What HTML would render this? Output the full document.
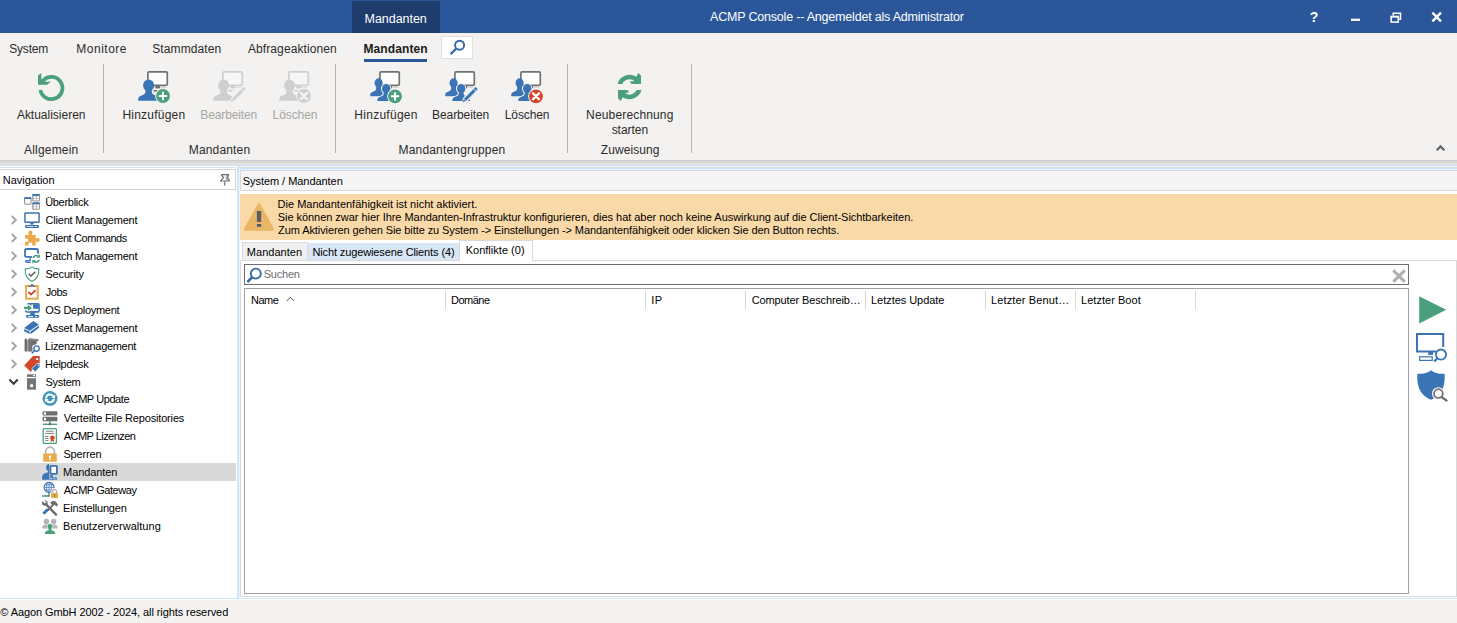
<!DOCTYPE html>
<html lang="de"><head><meta charset="utf-8"><title>ACMP Console</title>
<style>
html,body{margin:0;padding:0}
body{width:1457px;height:623px;overflow:hidden;position:relative;background:#fff;font-family:"Liberation Sans",sans-serif}
.b{position:absolute;box-sizing:border-box}
.t{position:absolute;white-space:pre;font-family:"Liberation Sans",sans-serif}
svg{position:absolute;overflow:visible}

</style></head>
<body>
<!-- title bar -->
<div class="b" style="left:0;top:0;width:1457px;height:33px;background:#2b579a"></div>
<div class="b" style="left:352px;top:1px;width:88px;height:32px;background:#1e3c6c"></div>
<!-- ribbon -->
<div class="b" style="left:0;top:33px;width:1457px;height:127px;background:#f3f2f1"></div>
<div class="b" style="left:0;top:160px;width:1457px;height:5px;background:linear-gradient(#d1d1d1,#e4e4e4)"></div>
<div class="b" style="left:0;top:160px;width:1457px;height:1px;background:#cdcccb"></div>
<div class="b" style="left:364px;top:59px;width:63px;height:3px;background:#2b579a"></div>
<div class="b" style="left:441px;top:36px;width:32px;height:23px;background:#fff;border:1px solid #e1dfdd"></div>
<div class="b" style="left:103px;top:64px;width:1px;height:89px;background:#b6b4b2"></div>
<div class="b" style="left:335px;top:64px;width:1px;height:89px;background:#b6b4b2"></div>
<div class="b" style="left:567px;top:64px;width:1px;height:89px;background:#b6b4b2"></div>
<div class="b" style="left:691px;top:64px;width:1px;height:89px;background:#b6b4b2"></div>
<!-- client area -->
<div class="b" style="left:0;top:165px;width:1457px;height:1px;background:#cbe6fc"></div>
<!-- left panel -->
<div class="b" style="left:0;top:167px;width:236px;height:1px;background:#dedede"></div>
<div class="b" style="left:0;top:169px;width:236px;height:21px;background:#fff;border:1px solid #d4d4d4;border-left:0"></div>
<div class="b" style="left:0;top:463px;width:236px;height:18px;background:#d9d9d9"></div>
<div class="b" style="left:237px;top:166px;width:2px;height:433px;background:#cfe6fb"></div>
<div class="b" style="left:0;top:598px;width:1457px;height:1px;background:#cfe6fb"></div>
<!-- right panel -->
<div class="b" style="left:239px;top:166px;width:1218px;height:4px;background:#e4f2fe"></div>
<div class="b" style="left:239px;top:167px;width:1218px;height:1px;background:#dcdcdc"></div>
<div class="b" style="left:240px;top:168px;width:1217px;height:1px;background:#cbe6fc"></div>
<div class="b" style="left:239px;top:170px;width:1px;height:429px;background:#e9f4fe"></div>
<div class="b" style="left:240px;top:170px;width:1220px;height:21px;background:#f5f5f5;border:1px solid #d8d8d8"></div>
<div class="b" style="left:240px;top:194px;width:1217px;height:46px;background:#fad9a8"></div>
<!-- tabs -->
<div class="b" style="left:240px;top:260px;width:1217px;height:337px;background:#fff;border:1px solid #dadada"></div>
<div class="b" style="left:242px;top:242px;width:66px;height:18px;background:#f0f0f0;border:1px solid #dadada;border-bottom:0"></div>
<div class="b" style="left:307px;top:243px;width:153px;height:17px;background:#d8e6f5;border-left:1px solid #cfdff0;border-right:1px solid #cfdff0"></div>
<div class="b" style="left:459px;top:240px;width:74px;height:21px;background:#fff;border:1px solid #dadada;border-bottom:0"></div>
<!-- search -->
<div class="b" style="left:244px;top:264px;width:1165px;height:21px;background:#fff;border:1px solid #6e6e6e"></div>
<!-- grid -->
<div class="b" style="left:244px;top:288px;width:1165px;height:306px;background:#fff;border:1px solid #a0a0a8"></div>
<div class="b" style="left:445px;top:291px;width:1px;height:18px;background:#d5d5d5"></div>
<div class="b" style="left:645px;top:291px;width:1px;height:18px;background:#d5d5d5"></div>
<div class="b" style="left:745px;top:291px;width:1px;height:18px;background:#d5d5d5"></div>
<div class="b" style="left:865px;top:291px;width:1px;height:18px;background:#d5d5d5"></div>
<div class="b" style="left:985px;top:291px;width:1px;height:18px;background:#d5d5d5"></div>
<div class="b" style="left:1075px;top:291px;width:1px;height:18px;background:#d5d5d5"></div>
<div class="b" style="left:1195px;top:291px;width:1px;height:18px;background:#d5d5d5"></div>
<!-- footer -->
<div class="b" style="left:0;top:600px;width:1457px;height:23px;background:#f3f2f1"></div>

<svg style="left:38px;top:71px" width="32" height="32" viewBox="0 0 32 32"><path d="M5.1,9.6 A11.1,11.1 0 1 1 2.4,19" fill="none" stroke="#4a9f7c" stroke-width="3.8"/><path d="M3.3,1.9 L0,4.5 L0,13.8 L9.1,13.8 L12.8,10.7 L7,10.7 L3.3,8 Z" fill="#4a9f7c"/></svg>
<svg style="left:138px;top:71px" width="32" height="32" viewBox="0 0 32 32"><rect x="9.9" y="0.9" width="19.4" height="13.4" rx="1.2" fill="#ffffff" stroke="#727272" stroke-width="1.7"/><rect x="17.3" y="14.6" width="4.7" height="2.8" fill="#727272"/><rect x="22" y="16" width="6" height="1" fill="#d9d9d9"/><rect x="15.4" y="19" width="4" height="1.6" fill="#727272"/><ellipse cx="10.6" cy="14.3" rx="5.5" ry="5.9" fill="#3a74b5"/><path d="M0.2,29.8 C0,26.4 1.2,25.2 4.2,24.2 C7,23.2 7.6,22.2 7.4,19 L13.8,19 C13.6,22.2 14.2,23.2 17,24.2 C20,25.2 21.2,26.4 21,29.8 Z" fill="#3a74b5"/><circle cx="25" cy="25" r="7.9" fill="#f3f2f1"/><circle cx="25" cy="25" r="6.9" fill="#4a9f7c"/><path d="M20.86,25 L29.14,25 M25,20.86 L25,29.14" stroke="#fff" stroke-width="2.10" fill="none"/></svg>
<svg style="left:213px;top:71px" width="32" height="32" viewBox="0 0 32 32"><rect x="9.9" y="0.9" width="19.4" height="13.4" rx="1.2" fill="#f6f6f6" stroke="#cfcfcf" stroke-width="1.7"/><rect x="17.3" y="14.6" width="4.7" height="2.8" fill="#cfcfcf"/><rect x="22" y="16" width="6" height="1" fill="#e0e0e0"/><rect x="15.4" y="19" width="4" height="1.6" fill="#cfcfcf"/><ellipse cx="10.6" cy="14.3" rx="5.5" ry="5.9" fill="#cfcfcf"/><path d="M0.2,29.8 C0,26.4 1.2,25.2 4.2,24.2 C7,23.2 7.6,22.2 7.4,19 L13.8,19 C13.6,22.2 14.2,23.2 17,24.2 C20,25.2 21.2,26.4 21,29.8 Z" fill="#cfcfcf"/><path d="M16.60,32.31 L22.07,30.70 L34.26,18.43 L30.35,14.55 L18.17,26.82 Z" fill="#f3f2f1"/><path d="M17.30,31.60 L21.22,29.85 L32.70,18.29 L30.50,16.11 L19.02,27.67 Z" fill="#cfcfcf"/><path d="M31.08,20.35 L28.46,17.74" stroke="#f3f2f1" stroke-width="0.9"/><path d="M20.83,30.03 L18.85,28.06" stroke="#f3f2f1" stroke-width="0.7"/></svg>
<svg style="left:279px;top:71px" width="32" height="32" viewBox="0 0 32 32"><rect x="9.9" y="0.9" width="19.4" height="13.4" rx="1.2" fill="#f6f6f6" stroke="#cfcfcf" stroke-width="1.7"/><rect x="17.3" y="14.6" width="4.7" height="2.8" fill="#cfcfcf"/><rect x="22" y="16" width="6" height="1" fill="#e0e0e0"/><rect x="15.4" y="19" width="4" height="1.6" fill="#cfcfcf"/><ellipse cx="10.6" cy="14.3" rx="5.5" ry="5.9" fill="#cfcfcf"/><path d="M0.2,29.8 C0,26.4 1.2,25.2 4.2,24.2 C7,23.2 7.6,22.2 7.4,19 L13.8,19 C13.6,22.2 14.2,23.2 17,24.2 C20,25.2 21.2,26.4 21,29.8 Z" fill="#cfcfcf"/><circle cx="25" cy="25" r="7.9" fill="#f3f2f1"/><circle cx="25" cy="25" r="6.9" fill="#cfcfcf"/><path d="M22.033,22.033 L27.967,27.967 M27.967,22.033 L22.033,27.967" stroke="#f6f6f6" stroke-width="2.28" stroke-linecap="round" fill="none"/></svg>
<svg style="left:370px;top:71px" width="32" height="32" viewBox="0 0 32 32"><rect x="9.9" y="0.9" width="19.4" height="13.4" rx="1.2" fill="#ffffff" stroke="#727272" stroke-width="1.7"/><rect x="17.3" y="14.6" width="4.7" height="2.8" fill="#727272"/><rect x="22" y="16" width="6" height="1" fill="#d9d9d9"/><rect x="15.4" y="19" width="4" height="1.6" fill="#727272"/><ellipse cx="8.6" cy="11.9" rx="4.1" ry="4.6" fill="#3a74b5"/><path d="M0.2,25.2 C0,22.4 1,21.4 3.4,20.6 C5.8,19.8 6.3,18.8 6.2,16 L11,16 C10.9,18.8 11.4,19.8 13.8,20.6 C16.2,21.4 17.2,22.4 17,25.2 Z" fill="#3a74b5"/><ellipse cx="16.2" cy="17.7" rx="4.2" ry="4.8" fill="#f3f2f1" stroke="#f3f2f1" stroke-width="1.8"/><path d="M7.4,30 C7.2,27.4 8.2,26.4 10.8,25.6 C13.4,24.8 13.9,24 13.8,21.6 L18.6,21.6 C18.5,24 19,24.8 21.6,25.6 C24.2,26.4 25.2,27.4 25,30 Z"  fill="#f3f2f1" stroke="#f3f2f1" stroke-width="1.8"/><ellipse cx="16.2" cy="17.7" rx="4.2" ry="4.8" fill="#3a74b5"/><path d="M7.4,30 C7.2,27.4 8.2,26.4 10.8,25.6 C13.4,24.8 13.9,24 13.8,21.6 L18.6,21.6 C18.5,24 19,24.8 21.6,25.6 C24.2,26.4 25.2,27.4 25,30 Z"  fill="#3a74b5"/><circle cx="25" cy="25.3" r="7.9" fill="#f3f2f1"/><circle cx="25" cy="25.3" r="6.9" fill="#4a9f7c"/><path d="M20.86,25.3 L29.14,25.3 M25,21.16 L25,29.44" stroke="#fff" stroke-width="2.10" fill="none"/></svg>
<svg style="left:445px;top:71px" width="32" height="32" viewBox="0 0 32 32"><rect x="9.9" y="0.9" width="19.4" height="13.4" rx="1.2" fill="#ffffff" stroke="#727272" stroke-width="1.7"/><rect x="17.3" y="14.6" width="4.7" height="2.8" fill="#727272"/><rect x="22" y="16" width="6" height="1" fill="#d9d9d9"/><rect x="15.4" y="19" width="4" height="1.6" fill="#727272"/><ellipse cx="8.6" cy="11.9" rx="4.1" ry="4.6" fill="#3a74b5"/><path d="M0.2,25.2 C0,22.4 1,21.4 3.4,20.6 C5.8,19.8 6.3,18.8 6.2,16 L11,16 C10.9,18.8 11.4,19.8 13.8,20.6 C16.2,21.4 17.2,22.4 17,25.2 Z" fill="#3a74b5"/><ellipse cx="16.2" cy="17.7" rx="4.2" ry="4.8" fill="#f3f2f1" stroke="#f3f2f1" stroke-width="1.8"/><path d="M7.4,30 C7.2,27.4 8.2,26.4 10.8,25.6 C13.4,24.8 13.9,24 13.8,21.6 L18.6,21.6 C18.5,24 19,24.8 21.6,25.6 C24.2,26.4 25.2,27.4 25,30 Z"  fill="#f3f2f1" stroke="#f3f2f1" stroke-width="1.8"/><ellipse cx="16.2" cy="17.7" rx="4.2" ry="4.8" fill="#3a74b5"/><path d="M7.4,30 C7.2,27.4 8.2,26.4 10.8,25.6 C13.4,24.8 13.9,24 13.8,21.6 L18.6,21.6 C18.5,24 19,24.8 21.6,25.6 C24.2,26.4 25.2,27.4 25,30 Z"  fill="#3a74b5"/><path d="M16.60,32.31 L22.07,30.70 L34.26,18.43 L30.35,14.55 L18.17,26.82 Z" fill="#f3f2f1"/><path d="M17.30,31.60 L21.22,29.85 L32.70,18.29 L30.50,16.11 L19.02,27.67 Z" fill="#3a74b5"/><path d="M31.08,20.35 L28.46,17.74" stroke="#f3f2f1" stroke-width="0.9"/><path d="M20.83,30.03 L18.85,28.06" stroke="#f3f2f1" stroke-width="0.7"/></svg>
<svg style="left:511px;top:71px" width="32" height="32" viewBox="0 0 32 32"><rect x="9.9" y="0.9" width="19.4" height="13.4" rx="1.2" fill="#ffffff" stroke="#727272" stroke-width="1.7"/><rect x="17.3" y="14.6" width="4.7" height="2.8" fill="#727272"/><rect x="22" y="16" width="6" height="1" fill="#d9d9d9"/><rect x="15.4" y="19" width="4" height="1.6" fill="#727272"/><ellipse cx="8.6" cy="11.9" rx="4.1" ry="4.6" fill="#3a74b5"/><path d="M0.2,25.2 C0,22.4 1,21.4 3.4,20.6 C5.8,19.8 6.3,18.8 6.2,16 L11,16 C10.9,18.8 11.4,19.8 13.8,20.6 C16.2,21.4 17.2,22.4 17,25.2 Z" fill="#3a74b5"/><ellipse cx="16.2" cy="17.7" rx="4.2" ry="4.8" fill="#f3f2f1" stroke="#f3f2f1" stroke-width="1.8"/><path d="M7.4,30 C7.2,27.4 8.2,26.4 10.8,25.6 C13.4,24.8 13.9,24 13.8,21.6 L18.6,21.6 C18.5,24 19,24.8 21.6,25.6 C24.2,26.4 25.2,27.4 25,30 Z"  fill="#f3f2f1" stroke="#f3f2f1" stroke-width="1.8"/><ellipse cx="16.2" cy="17.7" rx="4.2" ry="4.8" fill="#3a74b5"/><path d="M7.4,30 C7.2,27.4 8.2,26.4 10.8,25.6 C13.4,24.8 13.9,24 13.8,21.6 L18.6,21.6 C18.5,24 19,24.8 21.6,25.6 C24.2,26.4 25.2,27.4 25,30 Z"  fill="#3a74b5"/><circle cx="25" cy="25.3" r="7.9" fill="#f3f2f1"/><circle cx="25" cy="25.3" r="6.9" fill="#d1472c"/><path d="M22.033,22.333000000000002 L27.967,28.267 M27.967,22.333000000000002 L22.033,28.267" stroke="#fff" stroke-width="2.28" stroke-linecap="round" fill="none"/></svg>
<svg style="left:614px;top:71px" width="32" height="32" viewBox="0 0 32 32"><clipPath id="cs1"><rect x="0" y="0" width="32" height="12.9"/></clipPath><path d="M5.5,16 A10,10 0 0 1 22.6,9" fill="none" stroke="#4a9f7c" stroke-width="4.4" clip-path="url(#cs1)"/><path d="M24.3,1.9 L27,4.6 L27,12.9 L17.6,12.9 L15.8,10.4 L20,10 Z" fill="#4a9f7c"/><g transform="rotate(180 15.5 15.95)"><path d="M5.5,16 A10,10 0 0 1 22.6,9" fill="none" stroke="#4a9f7c" stroke-width="4.4" clip-path="url(#cs1)"/><path d="M24.3,1.9 L27,4.6 L27,12.9 L17.6,12.9 L15.8,10.4 L20,10 Z" fill="#4a9f7c"/></g></svg>
<svg style="left:441px;top:36px" width="32" height="23" viewBox="0 0 32 23"><circle cx="18.6" cy="9.2" r="4.5" fill="none" stroke="#2f66a8" stroke-width="1.9"/><path d="M15.3,12.5 L9.5,18.3" stroke="#2f66a8" stroke-width="2.3" fill="none"/></svg>
<svg style="left:1351px;top:18px" width="10" height="4" viewBox="0 0 10 4"><rect x="0" y="0.7" width="9" height="2.2" fill="#ffffff"/></svg>
<svg style="left:1390px;top:11.6px" width="12" height="12" viewBox="0 0 12 12"><path d="M3.2,3.6 V1.3 H10.5 V7.2 H8.2" fill="none" stroke="#ffffff" stroke-width="1.5"/><rect x="1.2" y="4.5" width="7" height="5.6" fill="none" stroke="#ffffff" stroke-width="1.5"/><rect x="0.5" y="3.9" width="8.4" height="1.6" fill="#ffffff"/></svg>
<svg style="left:1431px;top:11px" width="12" height="12" viewBox="0 0 12 12"><path d="M1.4,1.6 L10,10.4 M10,1.6 L1.4,10.4" stroke="#ffffff" stroke-width="2.4" fill="none"/></svg>
<svg style="left:1435px;top:144px" width="12" height="8" viewBox="0 0 12 8"><path d="M1.7,6.3 L5.5,2.5 L9.3,6.3" fill="none" stroke="#666" stroke-width="2.3"/></svg>
<svg style="left:218px;top:173px" width="14" height="14" viewBox="0 0 14 14"><path d="M7.6,2.3 L10.5,2.3 L9.3,4.6 L11,7.4 L7.6,7.4 Z" fill="#b4b4b4"/><path d="M3,1.7 H11 M3.4,2 L5.6,4.6 L2.6,7.6 M10.7,2 L9.5,4.6 L11.5,7.6 M2.1,8 H11.9 M7,8.6 L6.5,12.6" fill="none" stroke="#707070" stroke-width="1.2"/></svg>
<svg style="left:10px;top:215.3px" width="8" height="10" viewBox="0 0 8 10"><path d="M1.7,1 L5.9,5 L1.7,9" fill="none" stroke="#a4a4a4" stroke-width="1.8"/></svg>
<svg style="left:10px;top:233.3px" width="8" height="10" viewBox="0 0 8 10"><path d="M1.7,1 L5.9,5 L1.7,9" fill="none" stroke="#a4a4a4" stroke-width="1.8"/></svg>
<svg style="left:10px;top:251.3px" width="8" height="10" viewBox="0 0 8 10"><path d="M1.7,1 L5.9,5 L1.7,9" fill="none" stroke="#a4a4a4" stroke-width="1.8"/></svg>
<svg style="left:10px;top:269.3px" width="8" height="10" viewBox="0 0 8 10"><path d="M1.7,1 L5.9,5 L1.7,9" fill="none" stroke="#a4a4a4" stroke-width="1.8"/></svg>
<svg style="left:10px;top:287.3px" width="8" height="10" viewBox="0 0 8 10"><path d="M1.7,1 L5.9,5 L1.7,9" fill="none" stroke="#a4a4a4" stroke-width="1.8"/></svg>
<svg style="left:10px;top:305.3px" width="8" height="10" viewBox="0 0 8 10"><path d="M1.7,1 L5.9,5 L1.7,9" fill="none" stroke="#a4a4a4" stroke-width="1.8"/></svg>
<svg style="left:10px;top:323.3px" width="8" height="10" viewBox="0 0 8 10"><path d="M1.7,1 L5.9,5 L1.7,9" fill="none" stroke="#a4a4a4" stroke-width="1.8"/></svg>
<svg style="left:10px;top:341.3px" width="8" height="10" viewBox="0 0 8 10"><path d="M1.7,1 L5.9,5 L1.7,9" fill="none" stroke="#a4a4a4" stroke-width="1.8"/></svg>
<svg style="left:10px;top:359.3px" width="8" height="10" viewBox="0 0 8 10"><path d="M1.7,1 L5.9,5 L1.7,9" fill="none" stroke="#a4a4a4" stroke-width="1.8"/></svg>
<svg style="left:8px;top:378px" width="12" height="8" viewBox="0 0 12 8"><path d="M1.4,1.6 L5.6,5.8 L9.8,1.6" fill="none" stroke="#3c3c3c" stroke-width="2.1"/></svg>
<svg style="left:24px;top:194px" width="16" height="16" viewBox="0 0 16 16"><rect x="0.6" y="3.8" width="6.4" height="6.4" rx="0.6" fill="#fff" stroke="#858585" stroke-width="1"/><rect x="0.1" y="3.3" width="7.3" height="1.6" rx="0.5" fill="#3a74b5"/><rect x="8.4" y="0.1" width="7.4" height="7.2" rx="0.5" fill="#bdbdbd"/><rect x="8.8" y="0.5" width="6.6" height="6.4" rx="0.3" fill="none" stroke="#8c8c8c" stroke-width="0.8"/><rect x="8.4" y="0.1" width="7.4" height="1.75" rx="0.5" fill="#3a74b5"/><rect x="9.7" y="2.30" width="2.3" height="1.8" fill="#fff"/><rect x="13" y="2.30" width="2" height="1.8" fill="#fff"/><rect x="9.7" y="4.90" width="2.3" height="1.5" fill="#fff"/><rect x="13" y="4.90" width="2" height="1.5" fill="#fff"/><rect x="8.4" y="8.4" width="7.4" height="7.2" rx="0.5" fill="#bdbdbd"/><rect x="8.8" y="8.8" width="6.6" height="6.4" rx="0.3" fill="none" stroke="#8c8c8c" stroke-width="0.8"/><rect x="8.4" y="8.4" width="7.4" height="1.75" rx="0.5" fill="#3a74b5"/><rect x="9.7" y="10.60" width="2.3" height="1.8" fill="#fff"/><rect x="13" y="10.60" width="2" height="1.8" fill="#fff"/><rect x="9.7" y="13.20" width="2.3" height="1.5" fill="#fff"/><rect x="13" y="13.20" width="2" height="1.5" fill="#fff"/></svg>
<svg style="left:24px;top:212px" width="16" height="16" viewBox="0 0 16 16"><rect x="0.95" y="0.95" width="14.1" height="9.3" rx="0.3" fill="#fff" stroke="#3a74b5" stroke-width="1.5"/><rect x="6.3" y="11" width="3.3" height="1.6" fill="#3a74b5"/><rect x="1" y="13" width="14" height="3" rx="1" fill="#3a74b5"/><rect x="2.8" y="14.1" width="6.8" height="0.8" fill="#fff"/><rect x="11" y="14.1" width="2" height="0.8" fill="#fff"/></svg>
<svg style="left:24px;top:230px" width="16" height="16" viewBox="0 0 16 16"><path d="M1,5 H5 C3.6,2.4 5,0.6 6.4,0.6 C7.8,0.6 9.2,2.4 7.8,5 H11.6 V8.6 C14,7.2 15.8,8.6 15.8,10 C15.8,11.4 14,12.8 11.6,11.4 V15.6 H8 C9,13.6 8,12.4 6.4,12.4 C4.8,12.4 3.8,13.6 4.8,15.6 H1 V11.6 C3,12.6 4.2,11.6 4.2,10.2 C4.2,8.8 3,7.8 1,8.8 Z" fill="#e8aa4b"/></svg>
<svg style="left:24px;top:248px" width="16" height="16" viewBox="0 0 16 16"><path d="M14,5.7 V2.4 Q14,1 12.6,1 H2.4 Q1,1 1,2.4 V7.4 Q1,8.8 2.4,8.8 H7.9" fill="none" stroke="#3a74b5" stroke-width="1.8"/><rect x="5.5" y="9.4" width="1.2" height="2.8" fill="#3a74b5"/><path d="M6.8,12.6 H2.6 Q1.6,12.6 1.6,13.5 Q1.6,14.4 2.6,14.4 H6.8" fill="none" stroke="#3a74b5" stroke-width="1.15"/><path d="M9.1,10 A3.4,3.4 0 0 1 14.3,8.2" fill="none" stroke="#4a9f7c" stroke-width="1.6"/><path d="M15.9,6 V9.7 H12.3 Z" fill="#4a9f7c"/><g transform="rotate(180 12.1 10.9)"><path d="M9.1,10 A3.4,3.4 0 0 1 14.3,8.2" fill="none" stroke="#4a9f7c" stroke-width="1.6"/><path d="M15.9,6 V9.7 H12.3 Z" fill="#4a9f7c"/></g></svg>
<svg style="left:24px;top:266px" width="16" height="16" viewBox="0 0 16 16"><path d="M8,0.8 C6,2.6 3.6,3 1.2,2.8 C0.8,8.6 2.6,13 8,15.4 C13.4,13 15.2,8.6 14.8,2.8 C12.4,3 10,2.6 8,0.8 Z" fill="#fff" stroke="#4a9f7c" stroke-width="1.1"/><path d="M4.6,7.8 L7,10 L11.4,5.8" fill="none" stroke="#5a5a5a" stroke-width="1.5"/></svg>
<svg style="left:24px;top:284px" width="16" height="16" viewBox="0 0 16 16"><rect x="2.05" y="2" width="11.7" height="12.7" fill="#fff" stroke="#e8aa4b" stroke-width="2"/><path d="M4.1,3 L5.4,1.4 H6.5 L7,0 H9.1 L9.6,1.4 H10.6 L11.8,3 Z" fill="#7c7c7c"/><path d="M4.4,8 L7.1,10.5 L11.7,6.2" fill="none" stroke="#d1472c" stroke-width="1.8"/></svg>
<svg style="left:24px;top:302px" width="16" height="16" viewBox="0 0 16 16"><path d="M3.6,1.7 H13.8 Q15.1,1.7 15.1,3 V8.6 Q15.1,9.9 13.8,9.9 H3 Q1.6,9.9 1.6,8.2" fill="none" stroke="#3a74b5" stroke-width="1.5"/><rect x="9.1" y="2.2" width="5.6" height="4.6" fill="#3a74b5"/><rect x="6.2" y="1.7" width="1" height="1.9" fill="#3a74b5"/><rect x="6.2" y="9" width="9" height="1.4" fill="#3a74b5"/><path d="M0,4.8 H3.8 V2.8 L8,5.95 L3.8,9.1 V7.1 H0 Z" fill="#4a9f7c" stroke="#fff" stroke-width="0.9" paint-order="stroke" stroke-linejoin="round"/><rect x="6.2" y="10.4" width="4.6" height="2.8" fill="#3a74b5"/><rect x="2" y="12.9" width="13.2" height="2.9" rx="1.2" fill="#3a74b5"/><rect x="3.9" y="14" width="5.2" height="0.85" fill="#fff"/><rect x="11.2" y="14" width="1.9" height="0.85" fill="#fff"/></svg>
<svg style="left:24px;top:320px" width="16" height="16" viewBox="0 0 16 16"><path d="M0.1,8 L9.3,1 L14.9,4.4 L5.9,10.8 Z" fill="#3a74b5"/><path d="M0.1,8.9 L5.6,11.6 V14 L0.1,11.2 Z" fill="#3a74b5"/><path d="M6.5,11.6 L14.9,5.5 V8.1 L6.5,14.3 Z" fill="#3a74b5"/></svg>
<svg style="left:24px;top:338px" width="16" height="16" viewBox="0 0 16 16"><path d="M0.1,2.6 L2,0.1 L3.6,2.6 V13.4 H0.6 V2.6 Z" fill="#6c6c6c"/><path d="M4.2,1 L6,0.3 L14.5,1.2 V3 L12.6,3.4 V6 L8.4,7.4 V13.5 H4.2 Z" fill="#6c6c6c"/><path d="M6,1.4 L14.4,2.2" stroke="#b0b0b0" stroke-width="0.7"/><path d="M6.3,1.6 V13.4" stroke="#8e8e8e" stroke-width="0.6"/><circle cx="12.6" cy="10.5" r="2.7" fill="#fff" stroke="#3a74b5" stroke-width="1.35"/><path d="M10.6,12.5 L7.7,15.5" stroke="#3a74b5" stroke-width="1.6"/></svg>
<svg style="left:24px;top:356px" width="16" height="16" viewBox="0 0 16 16"><path d="M0.2,9.4 L9,0 H15.7 V6.4 L6.6,15.8 Z" fill="#d1472c"/><rect x="12" y="1.9" width="2.2" height="2.1" rx="0.5" fill="#fff"/><path d="M7.8,12.6 L13,7.6 H16 V10.8 L11.2,16 Z" fill="#3a74b5" stroke="#fff" stroke-width="0.7"/><circle cx="14.6" cy="9.4" r="0.6" fill="#fff"/></svg>
<svg style="left:24px;top:374px" width="16" height="16" viewBox="0 0 16 16"><rect x="3" y="0.3" width="9" height="2.6" fill="#767676"/><rect x="8.9" y="0.9" width="2.2" height="1" fill="#fff"/><rect x="3" y="4.2" width="9" height="11.5" fill="#767676"/><circle cx="7.6" cy="11.7" r="1.6" fill="#fff"/></svg>
<svg style="left:42px;top:391px" width="16" height="16" viewBox="0 0 16 16"><circle cx="8" cy="7.4" r="7.4" fill="#3f96ba"/><path d="M4.1,6.9 A3.9,3.9 0 0 1 11.2,5.2" fill="none" stroke="#fff" stroke-width="2"/><path d="M9.3,6.5 L13.2,3.7 L12.9,7.6 Z" fill="#fff"/><g transform="rotate(180 8 7.4)"><path d="M4.1,6.9 A3.9,3.9 0 0 1 11.2,5.2" fill="none" stroke="#fff" stroke-width="2"/><path d="M9.3,6.5 L13.2,3.7 L12.9,7.6 Z" fill="#fff"/></g></svg>
<svg style="left:42px;top:410px" width="16" height="16" viewBox="0 0 16 16"><rect x="0.6" y="1.2" width="14.8" height="4.4" rx="0.8" fill="#6f6f6f"/><rect x="2" y="2.2" width="2" height="2.4" fill="#fff"/><rect x="0.6" y="6.8" width="14.8" height="4.4" rx="0.8" fill="#6f6f6f"/><rect x="2" y="7.8" width="2" height="2.4" fill="#fff"/><rect x="7.2" y="11.2" width="1.6" height="2.6" fill="#4a9f7c"/><rect x="0.8" y="13.6" width="14.4" height="1.4" fill="#4a9f7c"/><rect x="6.6" y="13.4" width="2.8" height="1.8" fill="#6f6f6f"/></svg>
<svg style="left:42px;top:428px" width="16" height="16" viewBox="0 0 16 16"><rect x="1.2" y="0.6" width="13.2" height="14.8" rx="1" fill="#fff" stroke="#4a9f7c" stroke-width="1.3"/><path d="M4,3.2 H11.6 M3.4,5.4 H12 M3.2,8.4 H6.4 M3.2,10.4 H6.4 M3.2,12.4 H6.4" stroke="#6a6a6a" stroke-width="0.9" fill="none"/><circle cx="10.4" cy="9.8" r="2.3" fill="#d1472c"/><path d="M9,11.4 L8.6,14 L10.4,13 L12.2,14 L11.8,11.4 Z" fill="#d1472c"/></svg>
<svg style="left:42px;top:446px" width="16" height="16" viewBox="0 0 16 16"><path d="M3.6,8 V5.6 A4.4,4.4 0 0 1 12.4,5.6 V8" fill="none" stroke="#b5b5b5" stroke-width="1.7"/><rect x="1.2" y="7.4" width="13.6" height="8.4" rx="0.8" fill="#e8aa4b"/><circle cx="8" cy="10.6" r="1.2" fill="#fff"/><rect x="7.3" y="10.8" width="1.4" height="3.2" fill="#fff"/></svg>
<svg style="left:42px;top:464px" width="16" height="16" viewBox="0 0 16 16"><path d="M7.3,0.1 C5,0.1 4.1,1.8 4.1,3.4 C4.1,5 5,6.4 6.2,6.9 C6.2,8.2 5.4,8.6 3.4,9.2 C1.2,9.9 0.1,11 0.1,13.4 V15.8 H7.3 Z" fill="#3a74b5"/><rect x="8.5" y="1.95" width="6.4" height="7.85" rx="0.6" fill="#fff" stroke="#3a74b5" stroke-width="1.8"/><rect x="8.3" y="10.7" width="2.5" height="2.7" fill="#3a74b5"/><rect x="7.6" y="13.25" width="7.25" height="2.55" rx="0.6" fill="#3a74b5"/><rect x="8.3" y="14.2" width="1.7" height="0.8" fill="#fff"/><rect x="11.4" y="14.2" width="1.9" height="0.8" fill="#fff"/></svg>
<svg style="left:42px;top:482px" width="16" height="16" viewBox="0 0 16 16"><circle cx="7.1" cy="5.4" r="5" fill="#fff" stroke="#3a74b5" stroke-width="1.15"/><path d="M7.1,0.6 V10.2 M2.2,5.4 H12 M3,2.9 H11.2 M3,7.9 H11.2" stroke="#3a74b5" stroke-width="0.75" fill="none"/><ellipse cx="7.1" cy="5.4" rx="2.5" ry="4.9" fill="none" stroke="#3a74b5" stroke-width="0.75"/><rect x="6.2" y="10.6" width="1.5" height="2.8" fill="#4a9f7c"/><rect x="0.1" y="13.2" width="5.6" height="1.6" fill="#4a9f7c"/><rect x="5.3" y="13.2" width="2.45" height="1.6" fill="#6f6f6f"/><rect x="8.4" y="10.4" width="8" height="6" fill="#fff"/><path d="M10.5,11.4 V9.8 A2.1,2.4 0 0 1 14.7,9.8 V11.4" fill="none" stroke="#fff" stroke-width="2.6"/><path d="M10.5,11.4 V9.8 A2.1,2.4 0 0 1 14.7,9.8 V11.4" fill="none" stroke="#b4b4b4" stroke-width="1.3"/><rect x="9" y="11.1" width="7" height="4.9" fill="#e8aa4b"/><rect x="12.15" y="12.3" width="0.8" height="2.5" fill="#6a6a6a"/></svg>
<svg style="left:42px;top:500px" width="16" height="16" viewBox="0 0 16 16"><path d="M3.4,3.6 L14,14.6" stroke="#6e6e6e" stroke-width="2.4" stroke-linecap="round"/><circle cx="2.8" cy="3" r="2.8" fill="#6e6e6e"/><rect x="-0.2" y="-2" width="1.9" height="3.6" fill="#fff" transform="translate(1.9 2.1) rotate(-40)"/><path d="M11.4,4.6 L5.8,10.2" stroke="#6e6e6e" stroke-width="2"/><path d="M8.2,2.8 L11,0.7 L13.6,1.4 L16,4.6 L14.6,6.8 L12.6,4.8 L10.6,5.6 Z" fill="#6e6e6e"/><path d="M5.9,9.3 L1.4,13.8" stroke="#3a74b5" stroke-width="2.9"/></svg>
<svg style="left:42px;top:518px" width="16" height="16" viewBox="0 0 16 16"><circle cx="4.4" cy="3.6" r="2.8" fill="#b5b5b5"/><path d="M0.2,10.6 C0.2,7.6 1.4,6.8 4.4,6.6 C7.4,6.8 8,7.6 8,10.6 Z" fill="#b5b5b5"/><circle cx="11.6" cy="3.6" r="2.8" fill="#b5b5b5"/><path d="M8,10.6 C8,7.6 8.6,6.8 11.6,6.6 C14.6,6.8 15.8,7.6 15.8,10.6 Z" fill="#b5b5b5"/><ellipse cx="8" cy="8.6" rx="2.9" ry="3.2" fill="#4a9f7c" stroke="#fff" stroke-width="0.7"/><path d="M2.8,16 C2.8,13.4 4,12.6 6.6,12.2 L6.8,11 H9.2 L9.4,12.2 C12,12.6 13.2,13.4 13.2,16 Z" fill="#4a9f7c"/></svg>
<svg style="left:243px;top:201px" width="32" height="30" viewBox="0 0 32 30"><path d="M16,3.4 L29.8,28.4 H2.2 Z" fill="#e9b666" stroke="#e9b666" stroke-width="2.6" stroke-linejoin="round"/><rect x="13.9" y="10" width="4.3" height="11" fill="#5c5c66"/><rect x="13.9" y="23" width="4.3" height="2.8" fill="#5c5c66"/></svg>
<svg style="left:246px;top:267px" width="17" height="16" viewBox="0 0 17 16"><circle cx="9.8" cy="6.6" r="5" fill="none" stroke="#2f66a8" stroke-width="1.9"/><path d="M6.2,10.2 L1.4,15" stroke="#2f66a8" stroke-width="2.5" fill="none"/></svg>
<svg style="left:1392px;top:268px" width="16" height="16" viewBox="0 0 16 16"><path d="M1.3,2.3 L12.8,13.8 M12.8,2.3 L1.3,13.8" stroke="#b2b2b2" stroke-width="3.2" fill="none"/></svg>
<svg style="left:286px;top:296px" width="9" height="6" viewBox="0 0 9 6"><path d="M0.8,5 L4.4,1.2 L8,5" fill="none" stroke="#555" stroke-width="1"/></svg>
<svg style="left:1419px;top:296px" width="28" height="28" viewBox="0 0 28 28"><path d="M0.2,0.2 L27.2,13.8 L0.2,27.6 Z" fill="#4a9f7c"/></svg>
<svg style="left:1416px;top:333px" width="32" height="30" viewBox="0 0 32 30"><path d="M20,18.6 H1 V1 H27.2 V14" fill="none" stroke="#3a74b5" stroke-width="2"/><rect x="12.2" y="19" width="4.8" height="3" fill="#3a74b5"/><rect x="3.6" y="23.8" width="12.6" height="3.6" fill="none" stroke="#3a74b5" stroke-width="1.2"/><circle cx="25" cy="21.6" r="5.1" fill="#fff" stroke="#3a74b5" stroke-width="1.8"/><path d="M21.2,25.4 L18.2,28.6" stroke="#3a74b5" stroke-width="2.2"/></svg>
<svg style="left:1417px;top:370px" width="32" height="32" viewBox="0 0 32 32"><path d="M14,0.2 C10.6,3 6,4 0.4,3.8 C-0.2,14 1.6,24.6 14,29.8 C26.4,24.6 28.2,14 27.6,3.8 C22,4 17.4,3 14,0.2 Z" fill="#3a74b5"/><circle cx="21.4" cy="23.6" r="6.4" fill="#fff"/><path d="M24.6,26.8 L30.6,31.4" stroke="#fff" stroke-width="4.4"/><circle cx="21.4" cy="23.6" r="4.4" fill="#fff" stroke="#6b6b6b" stroke-width="1.7"/><path d="M24.6,26.8 L30.2,31.2" stroke="#6b6b6b" stroke-width="2.2"/></svg>
<div id="texts">
<span class="t" style="left:364.61px;top:11px;font-size:12.5px;line-height:16px;letter-spacing:-0.051px;color:#ffffff">Mandanten</span>
<span class="t" style="left:710.07px;top:9px;font-size:12.5px;line-height:16px;letter-spacing:-0.198px;color:#ffffff">ACMP Console -- Angemeldet als Administrator</span>
<span class="t" style="left:1309.74px;top:9px;font-size:14px;line-height:16px;letter-spacing:0.212px;color:#ffffff;font-weight:700">?</span>
<span class="t" style="left:9.22px;top:41px;font-size:12px;line-height:16px;letter-spacing:-0.177px;color:#2b2a29">System</span>
<span class="t" style="left:76.33px;top:41px;font-size:12px;line-height:16px;letter-spacing:0.494px;color:#2b2a29">Monitore</span>
<span class="t" style="left:152.22px;top:41px;font-size:12px;line-height:16px;letter-spacing:0.110px;color:#2b2a29">Stammdaten</span>
<span class="t" style="left:247.90px;top:41px;font-size:12px;line-height:16px;letter-spacing:0.107px;color:#2b2a29">Abfrageaktionen</span>
<span class="t" style="left:363.48px;top:41px;font-size:12px;line-height:16px;letter-spacing:0.099px;color:#1b1a19;font-weight:700">Mandanten</span>
<span class="t" style="left:16.90px;top:107px;font-size:12px;line-height:16px;letter-spacing:-0.010px;color:#2b2a29">Aktualisieren</span>
<span class="t" style="left:122.43px;top:107px;font-size:12px;line-height:16px;letter-spacing:0.230px;color:#2b2a29">Hinzufügen</span>
<span class="t" style="left:200.34px;top:107px;font-size:12px;line-height:16px;letter-spacing:-0.126px;color:#a6a5a3">Bearbeiten</span>
<span class="t" style="left:272.61px;top:107px;font-size:12px;line-height:16px;letter-spacing:-0.084px;color:#a6a5a3">Löschen</span>
<span class="t" style="left:354.34px;top:107px;font-size:12px;line-height:16px;letter-spacing:0.269px;color:#2b2a29">Hinzufügen</span>
<span class="t" style="left:432.09px;top:107px;font-size:12px;line-height:16px;letter-spacing:-0.098px;color:#2b2a29">Bearbeiten</span>
<span class="t" style="left:504.79px;top:107px;font-size:12px;line-height:16px;letter-spacing:-0.115px;color:#2b2a29">Löschen</span>
<span class="t" style="left:586.12px;top:107px;font-size:12px;line-height:16px;letter-spacing:0.155px;color:#2b2a29">Neuberechnung</span>
<span class="t" style="left:611.64px;top:122px;font-size:12px;line-height:16px;letter-spacing:-0.018px;color:#2b2a29">starten</span>
<span class="t" style="left:24.06px;top:142px;font-size:12px;line-height:16px;letter-spacing:0.182px;color:#2b2a29">Allgemein</span>
<span class="t" style="left:188.79px;top:142px;font-size:12px;line-height:16px;letter-spacing:0.156px;color:#2b2a29">Mandanten</span>
<span class="t" style="left:398.56px;top:142px;font-size:12px;line-height:16px;letter-spacing:0.171px;color:#2b2a29">Mandantengruppen</span>
<span class="t" style="left:600.79px;top:142px;font-size:12px;line-height:16px;letter-spacing:0.071px;color:#2b2a29">Zuweisung</span>
<span class="t" style="left:2.83px;top:172px;font-size:11px;line-height:16px;letter-spacing:-0.027px;color:#000000">Navigation</span>
<span class="t" style="left:45.14px;top:194px;font-size:11px;line-height:16px;letter-spacing:-0.288px;color:#000000">Überblick</span>
<span class="t" style="left:45.56px;top:212px;font-size:11px;line-height:16px;letter-spacing:-0.210px;color:#000000">Client Management</span>
<span class="t" style="left:45.56px;top:230px;font-size:11px;line-height:16px;letter-spacing:-0.402px;color:#000000">Client Commands</span>
<span class="t" style="left:45.07px;top:248px;font-size:11px;line-height:16px;letter-spacing:-0.192px;color:#000000">Patch Management</span>
<span class="t" style="left:45.44px;top:266px;font-size:11px;line-height:16px;letter-spacing:-0.168px;color:#000000">Security</span>
<span class="t" style="left:45.70px;top:284px;font-size:11px;line-height:16px;letter-spacing:-0.445px;color:#000000">Jobs</span>
<span class="t" style="left:45.33px;top:302px;font-size:11px;line-height:16px;letter-spacing:-0.283px;color:#000000">OS Deployment</span>
<span class="t" style="left:45.72px;top:320px;font-size:11px;line-height:16px;letter-spacing:-0.195px;color:#000000">Asset Management</span>
<span class="t" style="left:45.03px;top:338px;font-size:11px;line-height:16px;letter-spacing:-0.318px;color:#000000">Lizenzmanagement</span>
<span class="t" style="left:45.07px;top:356px;font-size:11px;line-height:16px;letter-spacing:-0.320px;color:#000000">Helpdesk</span>
<span class="t" style="left:45.44px;top:374px;font-size:11px;line-height:16px;letter-spacing:-0.279px;color:#000000">System</span>
<span class="t" style="left:63.72px;top:391px;font-size:11px;line-height:16px;letter-spacing:-0.432px;color:#000000">ACMP Update</span>
<span class="t" style="left:63.84px;top:410px;font-size:11px;line-height:16px;letter-spacing:-0.162px;color:#000000">Verteilte File Repositories</span>
<span class="t" style="left:63.72px;top:428px;font-size:11px;line-height:16px;letter-spacing:-0.541px;color:#000000">ACMP Lizenzen</span>
<span class="t" style="left:63.44px;top:446px;font-size:11px;line-height:16px;letter-spacing:-0.168px;color:#000000">Sperren</span>
<span class="t" style="left:63.09px;top:464px;font-size:11px;line-height:16px;letter-spacing:-0.096px;color:#000000">Mandanten</span>
<span class="t" style="left:63.72px;top:482px;font-size:11px;line-height:16px;letter-spacing:-0.434px;color:#000000">ACMP Gateway</span>
<span class="t" style="left:63.07px;top:500px;font-size:11px;line-height:16px;letter-spacing:-0.195px;color:#000000">Einstellungen</span>
<span class="t" style="left:63.07px;top:518px;font-size:11px;line-height:16px;letter-spacing:0.027px;color:#000000">Benutzerverwaltung</span>
<span class="t" style="left:0.29px;top:604px;font-size:11px;line-height:16px;letter-spacing:-0.089px;color:#000000">© Aagon GmbH 2002 - 2024, all rights reserved</span>
<span class="t" style="left:242.74px;top:173px;font-size:11px;line-height:16px;letter-spacing:-0.049px;color:#000000">System / Mandanten</span>
<span class="t" style="left:277.60px;top:196px;font-size:11px;line-height:16px;letter-spacing:-0.006px;color:#000000">Die Mandantenfähigkeit ist nicht aktiviert.</span>
<span class="t" style="left:277.70px;top:209px;font-size:11px;line-height:16px;letter-spacing:-0.040px;color:#000000">Sie können zwar hier Ihre Mandanten-Infrastruktur konfigurieren, dies hat aber noch keine Auswirkung auf die Client-Sichtbarkeiten.</span>
<span class="t" style="left:278.09px;top:222px;font-size:11px;line-height:16px;letter-spacing:-0.087px;color:#000000">Zum Aktivieren gehen Sie bitte zu System -> Einstellungen -> Mandantenfähigkeit oder klicken Sie den Button rechts.</span>
<span class="t" style="left:246.81px;top:244px;font-size:11px;line-height:16px;letter-spacing:0.031px;color:#000000">Mandanten</span>
<span class="t" style="left:312.41px;top:244px;font-size:11px;line-height:16px;letter-spacing:-0.119px;color:#000000">Nicht zugewiesene Clients (4)</span>
<span class="t" style="left:465.66px;top:242px;font-size:11px;line-height:16px;letter-spacing:0.020px;color:#000000">Konflikte (0)</span>
<span class="t" style="left:263.74px;top:266px;font-size:11px;line-height:16px;letter-spacing:-0.230px;color:#6d6d6d">Suchen</span>
<span class="t" style="left:251.02px;top:292px;font-size:11px;line-height:16px;letter-spacing:-0.533px;color:#000000">Name</span>
<span class="t" style="left:451.03px;top:292px;font-size:11px;line-height:16px;letter-spacing:-0.515px;color:#000000">Domäne</span>
<span class="t" style="left:651.20px;top:292px;font-size:11px;line-height:16px;letter-spacing:0.532px;color:#000000">IP</span>
<span class="t" style="left:751.75px;top:292px;font-size:11px;line-height:16px;letter-spacing:-0.128px;color:#000000">Computer Beschreib…</span>
<span class="t" style="left:871.03px;top:292px;font-size:11px;line-height:16px;letter-spacing:-0.043px;color:#000000">Letztes Update</span>
<span class="t" style="left:991.03px;top:292px;font-size:11px;line-height:16px;letter-spacing:0.132px;color:#000000">Letzter Benut…</span>
<span class="t" style="left:1081.03px;top:292px;font-size:11px;line-height:16px;letter-spacing:0.037px;color:#000000">Letzter Boot</span>
</div>
</body></html>
